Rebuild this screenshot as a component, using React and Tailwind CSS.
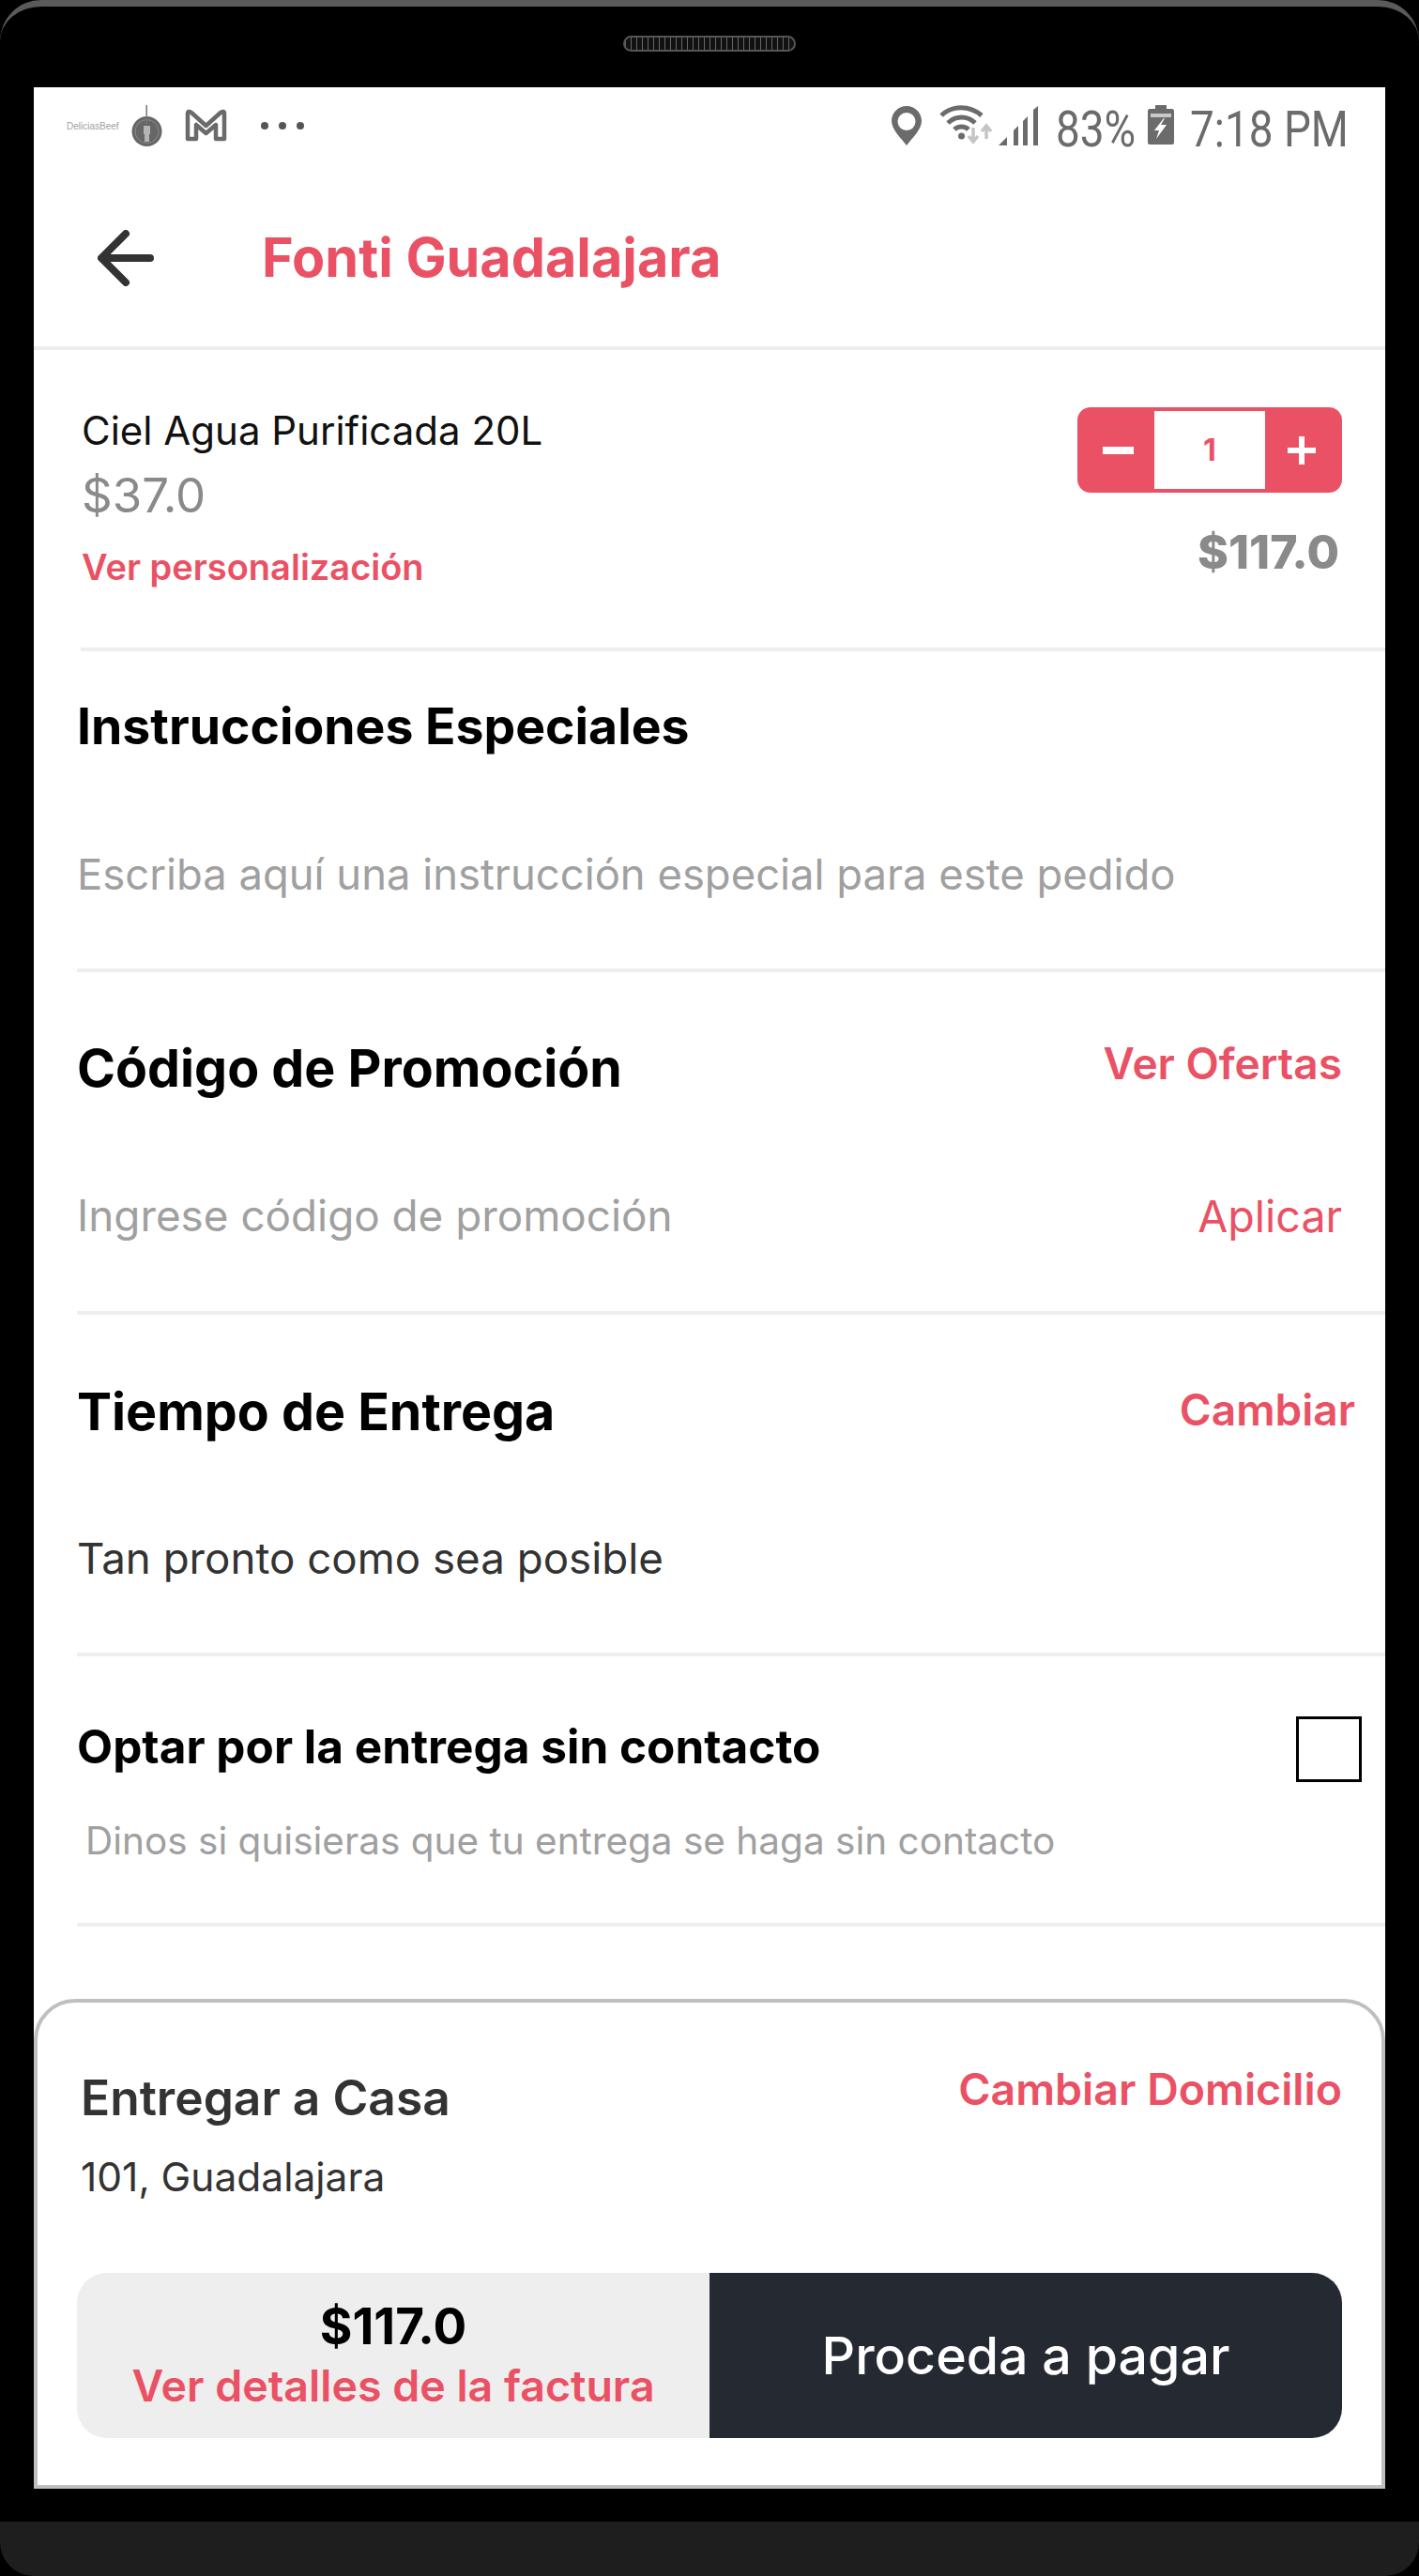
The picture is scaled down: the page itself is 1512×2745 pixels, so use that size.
const F = { fontFamily: "Inter, 'Open Sans', sans-serif" };

function Pin() {
  return (
    <svg width="32" height="42" viewBox="0 0 32 42">
      <path fillRule="evenodd" fill="#6b6b6b" d="M16 0C7 0 0 7 0 16c0 9 10 18 16 26 6-8 16-17 16-26C32 7 25 0 16 0zm0 7a9.500 9.500 0 1 1 0 19 9.500 9.500 0 0 1 0-19z" />
    </svg>
  );
}

function WifiIcon() {
  return (
    <svg width="56" height="42" viewBox="0 0 56 42" fill="none">
      <path d="M2 11C14 0 32 0 45 11" stroke="#6b6b6b" strokeWidth="5" />
      <path d="M9 19C17 11 30 11 38 19" stroke="#6b6b6b" strokeWidth="5" />
      <path d="M16 26c4-4 11-4 15 0" stroke="#6b6b6b" strokeWidth="5" />
      <circle cx="23.500" cy="33" r="3.500" fill="#6b6b6b" />
      <path d="M36 24v14M31 33l5 6 5-6" stroke="#c4c4c4" strokeWidth="3.500" />
      <path d="M50 36V24M45 28l5-6 5 6" stroke="#c4c4c4" strokeWidth="3.500" />
    </svg>
  );
}

function SignalIcon() {
  return (
    <svg width="42" height="42" viewBox="0 0 42 42" fill="#6b6b6b">
      <path d="M0 42L9 33V42Z" />
      <path d="M16 26L21 21V42H16Z" />
      <path d="M26 16L31 11V42H26Z" />
      <path d="M37 4L42 0V42H37Z" />
    </svg>
  );
}

function BatteryIcon() {
  return (
    <svg width="28" height="42" viewBox="0 0 28 42">
      <path fill="#6b6b6b" d="M8 0h12v4h6c1 0 2 1 2 2v34c0 1-1 2-2 2H2c-1 0-2-1-2-2V6c0-1 1-2 2-2h6z" />
      <rect x="3" y="9" width="22" height="4" fill="#c9c9c9" />
      <path fill="#fff" d="M17 14L7 27h5l-3 9 11-15h-6l4-7z" />
    </svg>
  );
}

function ForkLogo() {
  return (
    <svg width="33" height="44" viewBox="0 0 33 44">
      <circle cx="16.500" cy="28" r="16" fill="#666" />
      <circle cx="16.500" cy="28" r="12.500" fill="none" stroke="#8d8d8d" strokeWidth="1" />
      <path d="M15.500 0h1.500v20h-1.500z" fill="#777" />
      <path d="M13 22v9h1v8h5v-8h1v-9" fill="#b4b4b4" />
    </svg>
  );
}

function MailM() {
  return (
    <svg width="45" height="35" viewBox="0 0 45 35" fill="none">
      <path d="M3 32V5c0-2 2-3 4-1l15.500 14L38 4c2-2 4-1 4 1v27H33V17l-10.500 9L12 17v15z" stroke="#6a6a6a" strokeWidth="4.500" strokeLinejoin="round" />
    </svg>
  );
}

function StatusBar() {
  return (
    <div className="flex h-[107px] items-start">
      <span className="ml-[35px] mt-[35px] w-[69px] text-[10px] leading-[14px] text-[#a0a0a0]" style={{ fontFamily: "'Liberation Sans', sans-serif" }}>DeliciasBeef</span>
      <span className="mt-[19px]"><ForkLogo /></span>
      <span className="ml-[24px] mt-[23px]"><MailM /></span>
      <span className="ml-[36px] mt-[37px] flex gap-[11px]">
        <i className="size-[8px] rounded-full bg-[#555]" />
        <i className="size-[8px] rounded-full bg-[#555]" />
        <i className="size-[8px] rounded-full bg-[#555]" />
      </span>
      <span className="ml-auto mt-[20px]"><Pin /></span>
      <span className="ml-[19px] mt-[19px]"><WifiIcon /></span>
      <span className="ml-[7px] mt-[20px]"><SignalIcon /></span>
      <span className="ml-[19px] mt-[15px] w-[82px] origin-left scale-x-[0.85] text-[54px] leading-[60px] text-[#6b6b6b]" style={{ fontFamily: "Roboto, sans-serif" }}>83%</span>
      <span className="ml-[16px] mt-[19px]"><BatteryIcon /></span>
      <span className="ml-[17px] mr-[43px] mt-[15px] w-[165px] origin-left scale-x-[0.85] whitespace-nowrap text-[54px] leading-[60px] text-[#6b6b6b]" style={{ fontFamily: "Roboto, sans-serif" }}>7:18 PM</span>
    </div>
  );
}

function Header() {
  return (
    <div className="flex h-[173px] items-center border-b-[4px] border-[#eeeeee] pb-[19px]">
      <svg className="ml-[68px]" width="60" height="60" viewBox="0 0 60 60" fill="none">
        <path d="M56 30H6M30 4L4 30l26 26" stroke="#333" strokeWidth="8" strokeLinecap="round" strokeLinejoin="round" />
      </svg>
      <h1 className="ml-[115px] mt-[-3px] text-[57.500px] font-bold leading-[64px] text-[#ea5164]">Fonti Guadalajara</h1>
    </div>
  );
}

function Stepper() {
  return (
    <div className="flex h-[91px] w-[282px] items-stretch rounded-[14px] bg-[#ea5164] p-[4px]">
      <div className="flex w-[78px] items-center justify-center">
        <i className="block h-[8px] w-[33px] bg-white" />
      </div>
      <div className="flex w-[118px] items-center justify-center bg-white text-[32px] font-bold text-[#ea5164]">1</div>
      <div className="flex flex-1 items-center justify-center">
        <svg width="30" height="30" viewBox="0 0 30 30"><path d="M15 0v30M0 15h30" stroke="#fff" strokeWidth="6" /></svg>
      </div>
    </div>
  );
}

function Item() {
  return (
    <div className="relative ml-[50px] flex h-[321px] justify-between border-b-[4px] border-[#eeeeee] pr-[46px]">
      <div className="flex flex-col pl-[1px] pt-[56px]">
        <p className="text-[42px] leading-[60px] text-[#111]">Ciel Agua Purificada 20L</p>
        <p className="mt-[9px] text-[51px] leading-[60px] text-[#8a8a8a]">$37.0</p>
        <p className="mt-[16px] text-[38px] font-semibold leading-[60px] text-[#ea5164]">Ver personalización</p>
      </div>
      <div className="flex flex-col items-end pt-[61px]">
        <Stepper />
        <p className="mr-[3px] mt-[33px] text-[50px] font-extrabold leading-[60px] text-[#8a8a8a]">$117.0</p>
      </div>
    </div>
  );
}

function Section({ h, title, titleClass, action, actionClass, body, bodyClass, bodyAction, titleTop, bodyGap }) {
  return (
    <div className={`${h} ml-[46px] border-b-[4px] border-[#eeeeee] pr-[46px]`}>
      <div className={`flex items-start justify-between ${titleTop}`}>
        <h2 className={`font-bold leading-[64px] text-black ${titleClass}`}>{title}</h2>
        {action && <span className={`text-[46px] font-semibold leading-[60px] text-[#ea5164] ${actionClass || ""}`}>{action}</span>}
      </div>
      <div className={`flex items-center justify-between ${bodyGap}`}>
        <p className={`leading-[60px] ${bodyClass}`}>{body}</p>
        {bodyAction && <span className="text-[46.500px] font-normal leading-[60px] text-[#ea5164]">{bodyAction}</span>}
      </div>
    </div>
  );
}

function Contactless() {
  return (
    <div className="ml-[46px] h-[288px] border-b-[4px] border-[#eeeeee] pr-[25px]">
      <div className="flex items-start justify-between pt-[64px]">
        <h3 className="text-[49.500px] font-bold leading-[64px] text-black">Optar por la entrega sin contacto</h3>
        <div className="size-[70px] border-[3px] border-black" />
      </div>
      <p className="ml-[9px] mt-[33px] text-[40.500px] leading-[60px] text-[#a0a0a0]">Dinos si quisieras que tu entrega se haga sin contacto</p>
    </div>
  );
}

function Panel() {
  return (
    <div className="mt-[77px] h-[522px] rounded-t-[44px] border-[4px] border-[#bfbfbf] bg-white px-[42px]">
      <div className="flex items-start justify-between pl-[4px] pt-[62px]">
        <h2 className="mt-[9px] text-[51.500px] font-semibold leading-[60px] text-[#333]">Entregar a Casa</h2>
        <span className="text-[46.500px] font-semibold leading-[60px] text-[#ea5164]">Cambiar Domicilio</span>
      </div>
      <p className="ml-[4px] mt-[25px] text-[42.500px] leading-[60px] text-[#333]">101, Guadalajara</p>
      <div className="mt-[72px] flex h-[176px]">
        <div className="flex w-[674px] flex-col items-center justify-center rounded-l-[32px] bg-[#eeeeee]">
          <span className="mt-[-4px] text-[53px] font-bold leading-[60px] text-black">$117.0</span>
          <span className="mt-[8px] text-[46.500px] font-semibold leading-[50px] text-[#ea5164]">Ver detalles de la factura</span>
        </div>
        <div className="flex flex-1 items-center justify-center rounded-r-[32px] bg-[#252a32]">
          <span className="text-[55.500px] font-medium leading-[64px] text-white">Proceda a pagar</span>
        </div>
      </div>
    </div>
  );
}

export default function App() {
  return (
    <div className="flex h-[2745px] w-[1512px] flex-col overflow-hidden bg-black" style={F}>
      <div className="relative h-[93px] shrink-0 rounded-t-[44px] border-t-[7px] border-[#5a5a5a] bg-black">
        <div className="mx-auto mt-[31px] h-[17px] w-[184px] rounded-full border-[2px] border-[#555] bg-[repeating-linear-gradient(90deg,#666_0px,#666_1px,#111_1px,#111_6px)]" />
      </div>
      <div className="ml-[36px] h-[2559px] w-[1440px] shrink-0 overflow-hidden bg-white">
        <StatusBar />
        <Header />
        <Item />
        <Section h="h-[342px]" titleTop="pt-[48px]" titleClass="text-[53.500px]" title="Instrucciones Especiales" body="Escriba aquí una instrucción especial para este pedido" bodyClass="text-[45.400px] text-[#a0a0a0]" bodyGap="mt-[96px]" />
        <Section h="h-[365px]" titleTop="pt-[70px]" titleClass="text-[55.500px]" title="Código de Promoción" action="Ver Ofertas" actionClass="mt-[-3px]" body="Ingrese código de promoción" bodyClass="text-[45.800px] text-[#a0a0a0]" bodyAction="Aplicar" bodyGap="mt-[96px]" />
        <Section h="h-[364px]" titleTop="pt-[71px]" titleClass="text-[55.500px]" title="Tiempo de Entrega" action="Cambiar" actionClass="mr-[-14px]" body="Tan pronto como sea posible" bodyClass="text-[45.700px] text-[#333]" bodyGap="mt-[95px]" />
        <Contactless />
        <Panel />
      </div>
      <div className="mt-[35px] h-[58px] shrink-0 rounded-b-[36px] bg-[#1e1e1e]" />
    </div>
  );
}
